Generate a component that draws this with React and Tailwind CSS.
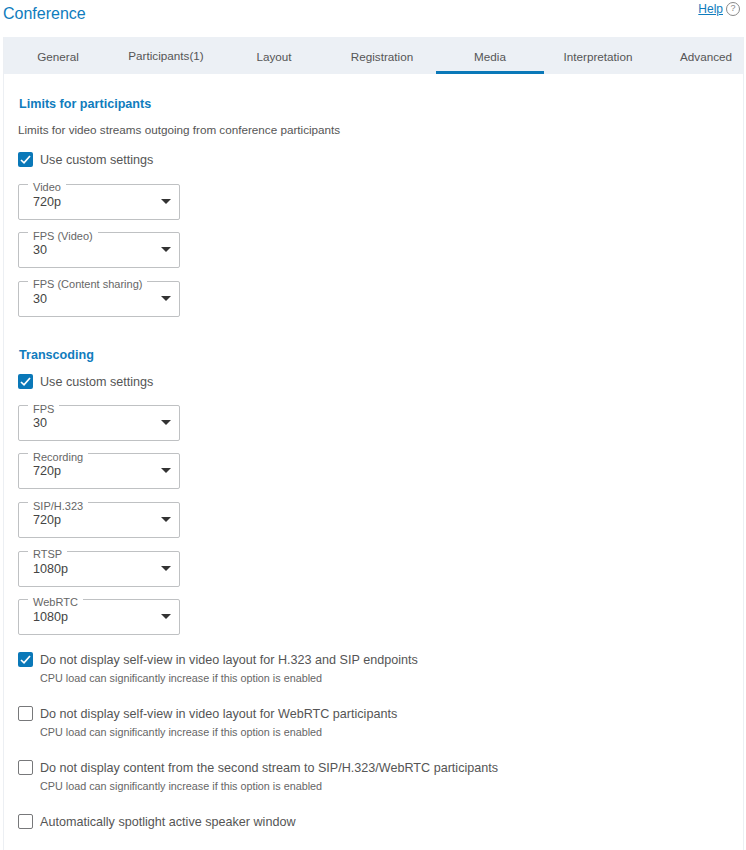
const tabs = ["General", "Participants(1)", "Layout", "Registration", "Media", "Interpretation", "Advanced"];

const Check = ({ checked }) =>
  checked ? (
    <span className="flex h-[15px] w-[15px] shrink-0 items-center justify-center rounded-[2px] bg-[#0a78b8]">
      <svg width="13" height="13" viewBox="0 0 13 13" fill="none" stroke="white" strokeWidth="1.7">
        <path d="M2 7 L5 9.8 L11 3" />
      </svg>
    </span>
  ) : (
    <span className="h-[15px] w-[15px] shrink-0 rounded-[2px] border border-[#77787a] bg-white" />
  );

const CheckRow = ({ checked, label, hint, className }) => (
  <div className={className}>
    <div className="flex h-[15px] items-center gap-[7px]">
      <Check checked={checked} />
      <span className="pt-[2px] text-[12.6px] text-[#555]">{label}</span>
    </div>
    {hint && <p className="mt-[4px] ml-[22px] text-[10.8px] leading-[14px] text-[#666]">{hint}</p>}
  </div>
);

const Select = ({ label, value, low, className }) => (
  <div className={`relative h-9 w-[162px] rounded-[2px] border border-[#bfc1c3] ${className || ""}`}>
    <span className={`absolute left-[9px] bg-white px-[5px] text-[11px] leading-[13px] text-[#666] ${low ? "top-[-3px]" : "top-[-4px]"}`}>{label}</span>
    <span className="absolute top-[10px] left-[14px] text-[12.6px] leading-[15px] text-[#444]">{value}</span>
    <span className="absolute top-[14px] right-[8px] h-0 w-0 border-x-[5px] border-t-[5px] border-x-transparent border-t-[#333]" />
  </div>
);

const hint = "CPU load can significantly increase if this option is enabled";

export default function App() {
  return (
    <div className="h-[850px] w-[746px] overflow-hidden bg-white font-['Liberation_Sans',sans-serif]">
      <div className="flex h-[37px] items-start justify-between pr-[6px] pl-[3px]">
        <h1 className="mt-[4px] text-[16px] leading-[19px] text-[#0f7cbd]">Conference</h1>
        <div className="mt-[2px] flex items-center gap-[3px]">
          <a className="text-[12px] leading-[13px] text-[#0f7cbd] underline">Help</a>
          <span className="flex h-[14px] w-[14px] items-center justify-center rounded-full border border-[#888] text-[9px] text-[#888]">?</span>
        </div>
      </div>
      <div className="mr-[2px] ml-[3px] h-[813px] border-x border-[#eceff3]">
        <div className="flex h-[37px] overflow-hidden bg-[#ecf0f5]">
          {tabs.map((t) => (
            <div
              key={t}
              className={`flex h-[37px] w-[108px] shrink-0 items-center justify-center text-[11.7px] text-[#555] ${t === "Media" ? "border-b-[3px] border-[#0a78b8] pt-[5px]" : t === "Participants(1)" ? "pt-[1px]" : "pt-[3px]"}`}
            >
              {t}
            </div>
          ))}
        </div>
        <div className="pt-[23px] pl-[14px]">
          <h2 className="pl-[1px] text-[12.6px] leading-[15px] font-bold text-[#0f7cbd]">Limits for participants</h2>
          <p className="mt-[11px] text-[11.7px] leading-[14px] text-[#555]">Limits for video streams outgoing from conference participants</p>
          <CheckRow checked label="Use custom settings" className="mt-[15px]" />
          <Select label="Video" value="720p" className="mt-[17px]" />
          <Select label="FPS (Video)" value="30" low className="mt-[12px]" />
          <Select label="FPS (Content sharing)" value="30" className="mt-[13px]" />
          <h2 className="mt-[31px] pl-[1px] text-[12.6px] leading-[15px] font-bold text-[#0f7cbd]">Transcoding</h2>
          <CheckRow checked label="Use custom settings" className="mt-[11px]" />
          <Select label="FPS" value="30" low className="mt-[16px]" />
          <Select label="Recording" value="720p" low className="mt-[12px]" />
          <Select label="SIP/H.323" value="720p" low className="mt-[13px]" />
          <Select label="RTSP" value="1080p" className="mt-[13px]" />
          <Select label="WebRTC" value="1080p" className="mt-[12px]" />
          <CheckRow checked label="Do not display self-view in video layout for H.323 and SIP endpoints" hint={hint} className="mt-[17px]" />
          <CheckRow label="Do not display self-view in video layout for WebRTC participants" hint={hint} className="mt-[21px]" />
          <CheckRow label="Do not display content from the second stream to SIP/H.323/WebRTC participants" hint={hint} className="mt-[21px]" />
          <CheckRow label="Automatically spotlight active speaker window" className="mt-[21px]" />
        </div>
      </div>
    </div>
  );
}
